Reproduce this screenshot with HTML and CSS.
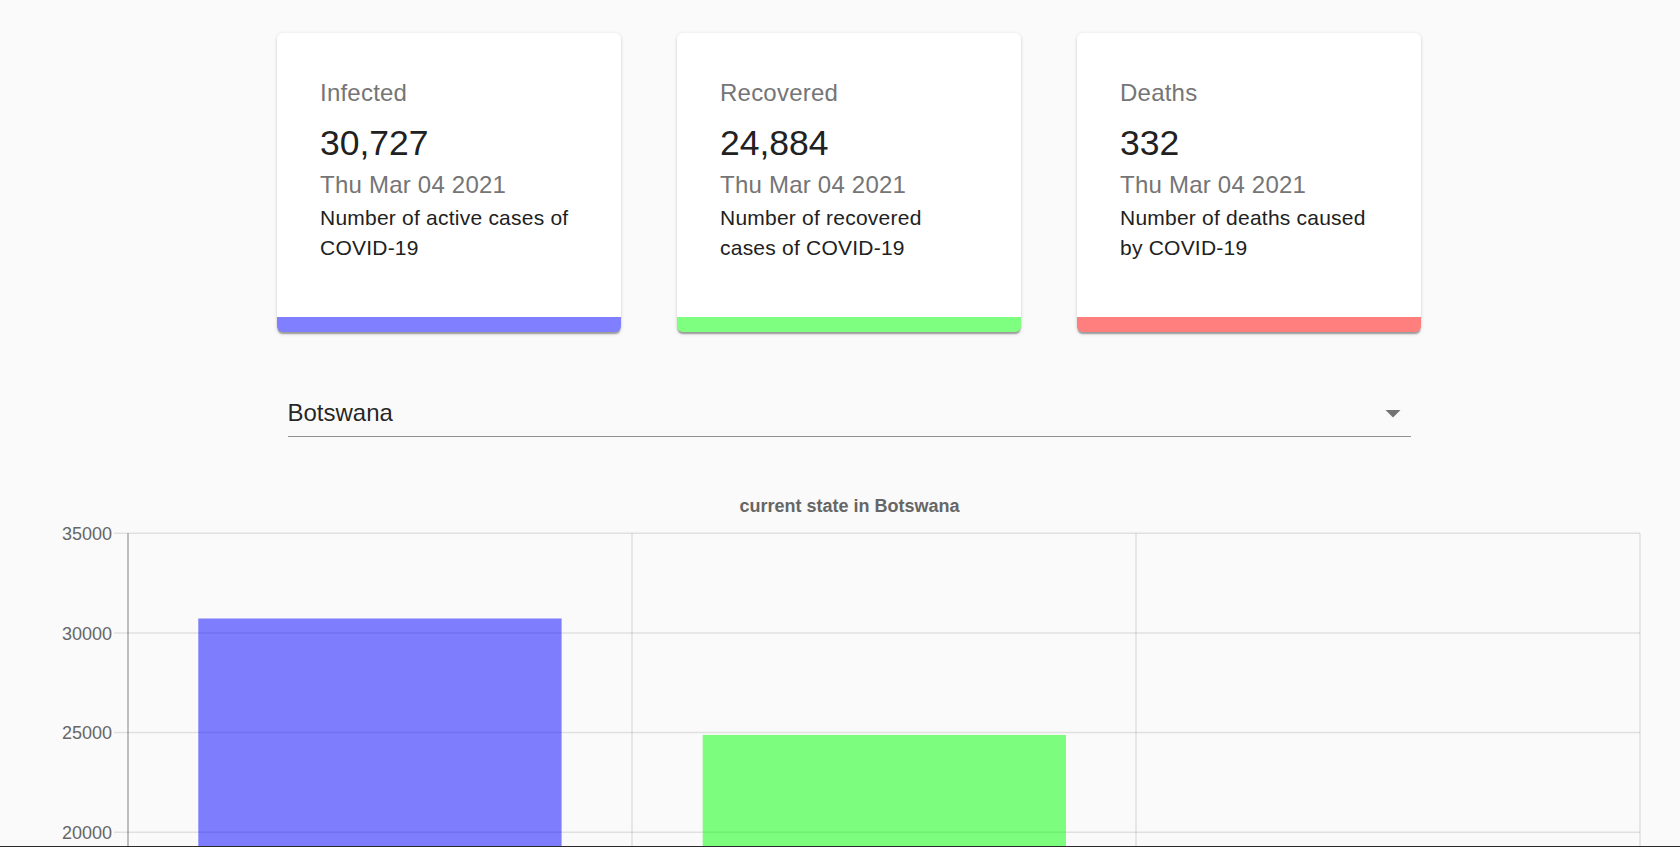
FILE: index.html
```html
<!DOCTYPE html>
<html lang="en">
<head>
<meta charset="utf-8">
<title>COVID-19 Tracker</title>
<link rel="stylesheet" href="styles.css">
</head>
<body>
<div class="page">
  <div class="cards">
    <div class="card card-infected">
      <div class="card-content">
        <p class="label">Infected</p>
        <p class="count">30,727</p>
        <p class="date">Thu Mar 04 2021</p>
        <p class="desc">Number of active cases of COVID-19</p>
      </div>
    </div>
    <div class="card card-recovered">
      <div class="card-content">
        <p class="label">Recovered</p>
        <p class="count">24,884</p>
        <p class="date">Thu Mar 04 2021</p>
        <p class="desc">Number of recovered cases of COVID-19</p>
      </div>
    </div>
    <div class="card card-deaths">
      <div class="card-content">
        <p class="label">Deaths</p>
        <p class="count">332</p>
        <p class="date">Thu Mar 04 2021</p>
        <p class="desc">Number of deaths caused by COVID-19</p>
      </div>
    </div>
  </div>

  <div class="picker">
    <div class="select">
      <span class="select-value">Botswana</span>
      <svg class="select-icon" viewBox="0 0 24 24" aria-hidden="true"><path d="M7 10l5 5 5-5z"></path></svg>
    </div>
  </div>

  <div class="chart">
    <svg class="chart-svg" width="1698" height="400" viewBox="0 0 1698 400">
      <text class="chart-title" x="849.5" y="52">current state in Botswana</text>

      <g class="grid">
        <line x1="114" x2="1640" y1="73.3" y2="73.3"></line>
        <line x1="114" x2="1640" y1="173" y2="173"></line>
        <line x1="114" x2="1640" y1="272.6" y2="272.6"></line>
        <line x1="114" x2="1640" y1="372.3" y2="372.3"></line>
        <line x1="632" x2="632" y1="73.3" y2="400"></line>
        <line x1="1136" x2="1136" y1="73.3" y2="400"></line>
        <line x1="1640" x2="1640" y1="73.3" y2="400"></line>
      </g>
      <line class="axis" x1="128" x2="128" y1="73.3" y2="400"></line>

      <g class="ticks">
        <text x="112" y="79.8">35000</text>
        <text x="112" y="179.5">30000</text>
        <text x="112" y="279.1">25000</text>
        <text x="112" y="378.8">20000</text>
      </g>

      <rect class="bar-infected" x="198.3" y="158.5" width="363.3" height="260"></rect>
      <rect class="bar-recovered" x="702.7" y="274.9" width="363.3" height="160"></rect>
    </svg>
  </div>
</div>
<div class="frame-edge"></div>
</body>
</html>
```

FILE: styles.css
```css
html, body {
  margin: 0;
  padding: 0;
  height: 847px;
  overflow: hidden;
  background: #fafafa;
}

.page {
  width: 1698px;
  padding-top: 33px;
  font-family: "Liberation Sans", Arial, Helvetica, sans-serif;
}

.cards {
  display: flex;
  justify-content: center;
  gap: 56px;
}

.card {
  width: 344px;
  box-sizing: border-box;
  background: #ffffff;
  border-radius: 6px;
  border-bottom: 15px solid;
  box-shadow: 0 3px 1.5px -1.5px rgba(0, 0, 0, 0.2),
              0 1.5px 1.5px 0 rgba(0, 0, 0, 0.14),
              0 1.5px 4.5px 0 rgba(0, 0, 0, 0.12);
}

.card-infected { border-bottom-color: #7f7fff; }
.card-recovered { border-bottom-color: #7fff7f; }
.card-deaths { border-bottom-color: #ff7f7f; }

.card-content {
  padding: 42px 43px 54px 43px;
}

.card-content p {
  margin: 0;
}

.label {
  font-size: 24px;
  line-height: 36px;
  letter-spacing: 0.225px;
  color: #757575;
  margin-bottom: 8.4px !important;
}

.count {
  font-size: 35.5px;
  line-height: 48px;
  color: #212121;
}

.date {
  font-size: 24px;
  line-height: 36px;
  letter-spacing: 0.225px;
  color: #757575;
}

.desc {
  font-size: 21px;
  line-height: 30px;
  letter-spacing: 0.225px;
  color: #212121;
}

.picker {
  width: 1123px;
  margin: 57px auto 0;
}

.select {
  position: relative;
  padding: 10px 0 8px;
  border-bottom: 1.5px solid rgba(0, 0, 0, 0.42);
}

.select-value {
  display: block;
  font-size: 24px;
  line-height: 28.5px;
  color: rgba(0, 0, 0, 0.87);
}

.select-icon {
  position: absolute;
  right: 0;
  top: 5.6px;
  width: 36px;
  height: 36px;
  fill: rgba(0, 0, 0, 0.54);
}

.chart {
  margin-top: 23.6px;
}

.chart-svg {
  display: block;
  font-family: "Liberation Sans", Arial, Helvetica, sans-serif;
}

.chart-title {
  font-size: 18px;
  font-weight: bold;
  fill: #666666;
  text-anchor: middle;
}

.grid line {
  stroke: rgba(0, 0, 0, 0.1);
  stroke-width: 1.5;
}

.axis {
  stroke: rgba(0, 0, 0, 0.32);
  stroke-width: 1.5;
}

.ticks text {
  font-size: 18px;
  fill: #666666;
  text-anchor: end;
}

.bar-infected { fill: rgba(0, 0, 255, 0.5); }
.bar-recovered { fill: rgba(0, 255, 0, 0.5); }

.frame-edge {
  position: fixed;
  left: 0;
  right: 0;
  bottom: 0;
  height: 1px;
  background: #2a2a2a;
}
```
